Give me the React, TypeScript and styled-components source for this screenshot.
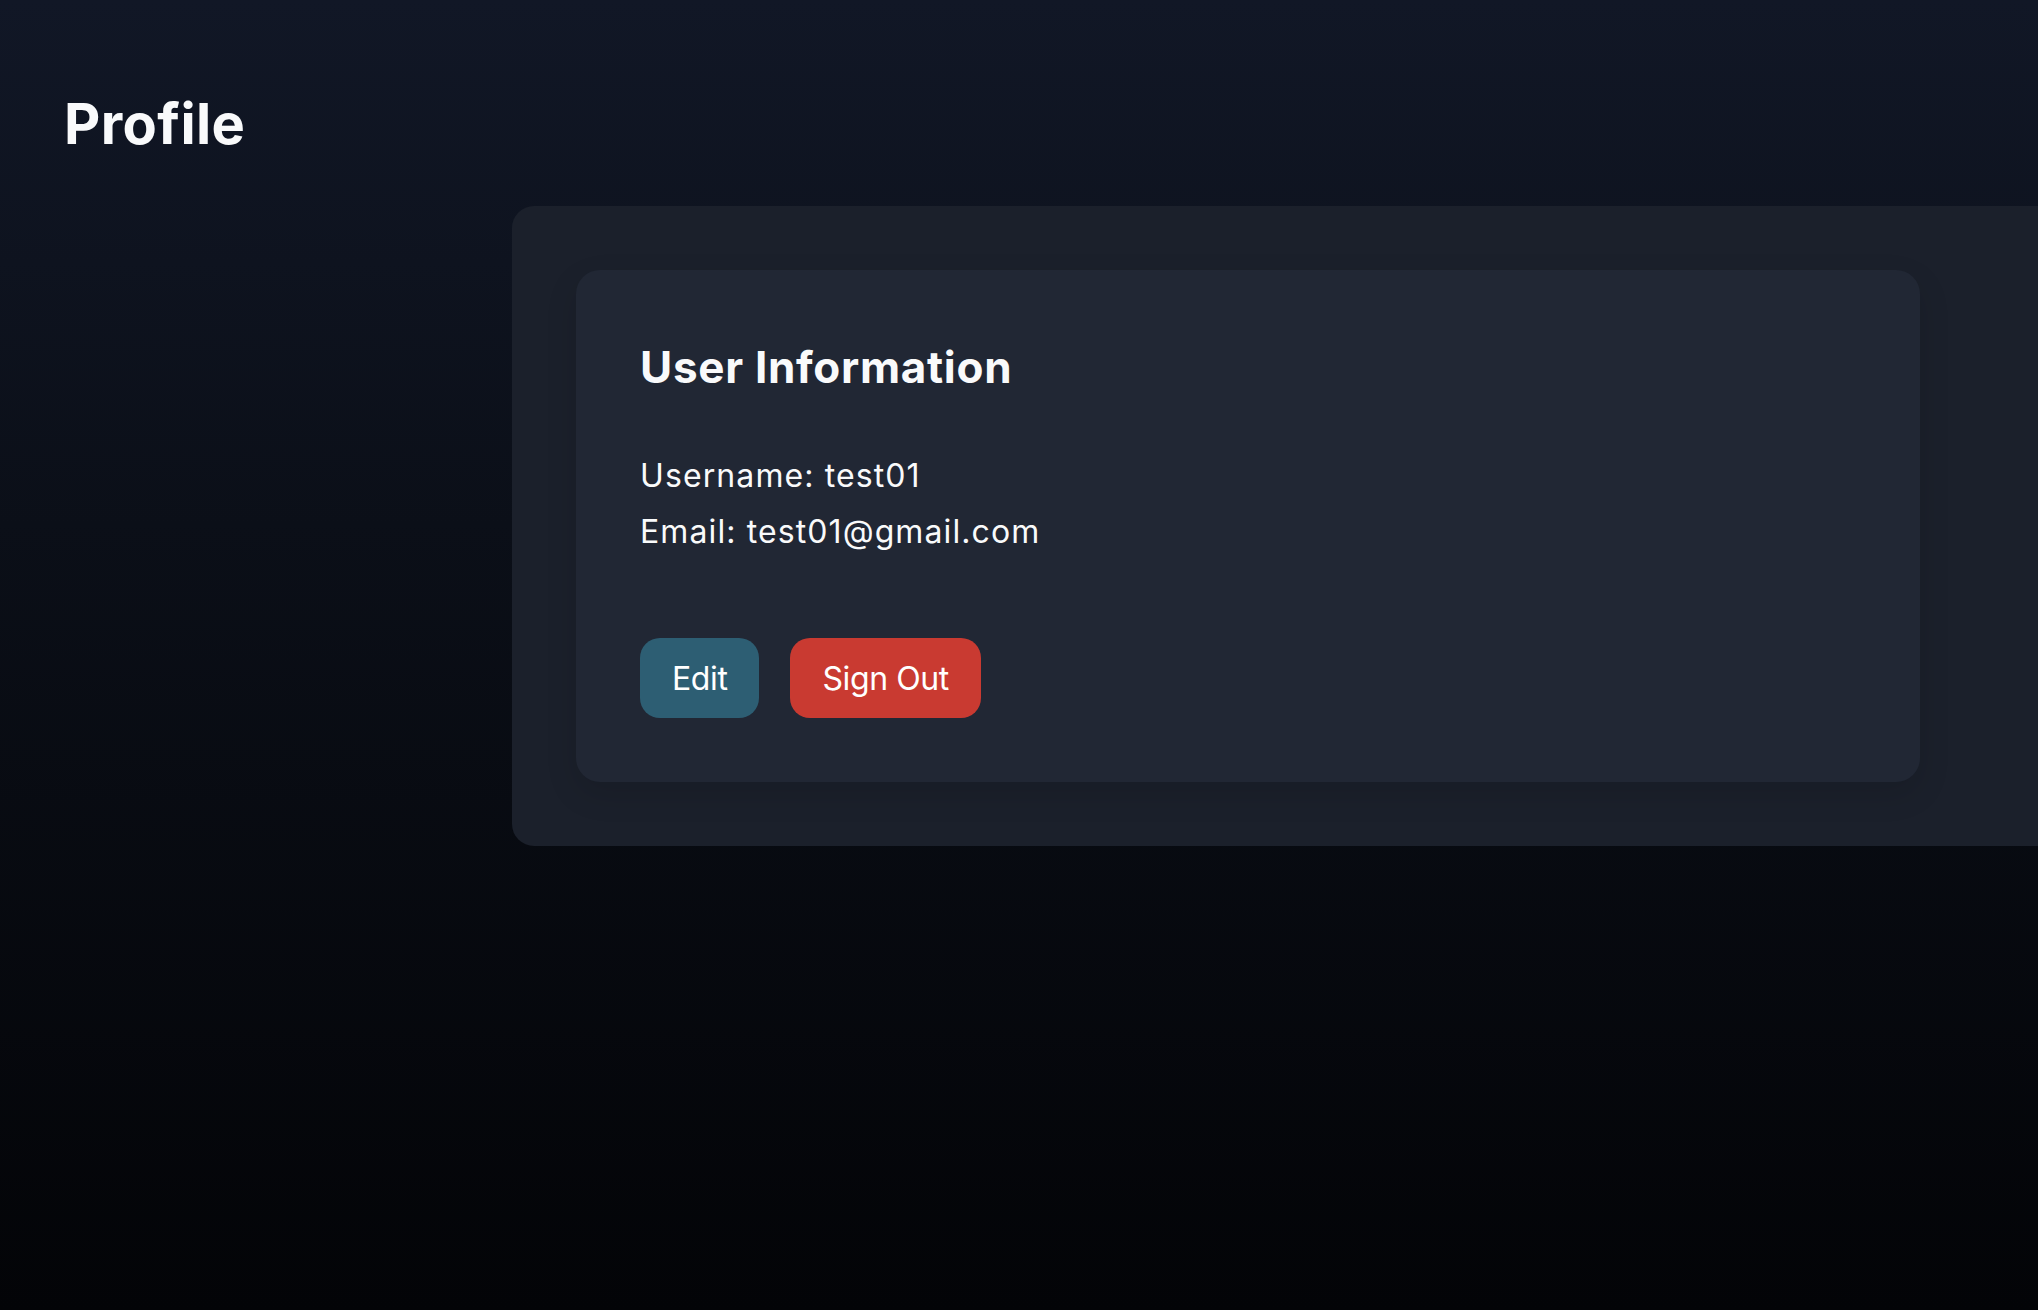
import React from "react";
import styled, { createGlobalStyle } from "styled-components";

const Global = createGlobalStyle`
  html, body {
    margin: 0;
    padding: 0;
    min-height: 100%;
    overflow: hidden;
  }
  body {
    font-family: Inter, "Noto Sans", "Liberation Sans", sans-serif;
    color: #f9fafb;
    background: #030407;
  }
`;

const Page = styled.div`
  box-sizing: border-box;
  width: 100%;
  min-height: 1310px;
  background: linear-gradient(180deg, #111726 0%, #0b0f18 40%, #030407 100%);
  padding: 82px 0 0 64px;
  display: flex;
  flex-direction: column;
`;

const PageTitle = styled.h1`
  margin: 0;
  font-size: 56px;
  line-height: 84px;
  font-weight: 700;
  letter-spacing: 0.4px;
  color: #f9fafb;
`;

const Body = styled.div`
  margin-top: 40px;
  padding-left: 448px;
  display: flex;
`;

const Panel = styled.section`
  flex: 1;
  box-sizing: border-box;
  background: #1b202b;
  border-radius: 22px 0 0 22px;
  padding: 64px;
  display: flex;
`;

const Card = styled.div`
  box-sizing: border-box;
  width: 1344px;
  background: #212734;
  border-radius: 24px;
  padding: 64px;
  box-shadow: 0 12px 32px rgba(0, 0, 0, 0.12);
`;

const CardTitle = styled.h2`
  margin: 0;
  font-size: 44px;
  line-height: 66px;
  font-weight: 700;
  letter-spacing: 0.7px;
`;

const Info = styled.div`
  margin-top: 48px;
  font-size: 32px;
  line-height: 56px;
  font-weight: 400;
  letter-spacing: 1.1px;
`;

const Line = styled.p`
  margin: 0;
`;

const Actions = styled.div`
  margin-top: 78px;
  display: flex;
  gap: 31px;
`;

const Button = styled.button<{ $tone: "edit" | "danger" }>`
  font-family: inherit;
  font-size: 32px;
  line-height: 48px;
  font-weight: 400;
  letter-spacing: -0.4px;
  color: #ffffff;
  border: none;
  border-radius: 20px;
  padding: 17px 32px 15px;
  cursor: pointer;
  background: ${(p) => (p.$tone === "edit" ? "#2d5e73" : "#c93a31")};
`;

export default function App() {
  return (
    <>
      <Global />
      <Page>
        <PageTitle>Profile</PageTitle>
        <Body>
          <Panel>
            <Card>
              <CardTitle>User Information</CardTitle>
              <Info>
                <Line>Username: test01</Line>
                <Line>Email: test01@gmail.com</Line>
              </Info>
              <Actions>
                <Button $tone="edit">Edit</Button>
                <Button $tone="danger">Sign Out</Button>
              </Actions>
            </Card>
          </Panel>
        </Body>
      </Page>
    </>
  );
}
